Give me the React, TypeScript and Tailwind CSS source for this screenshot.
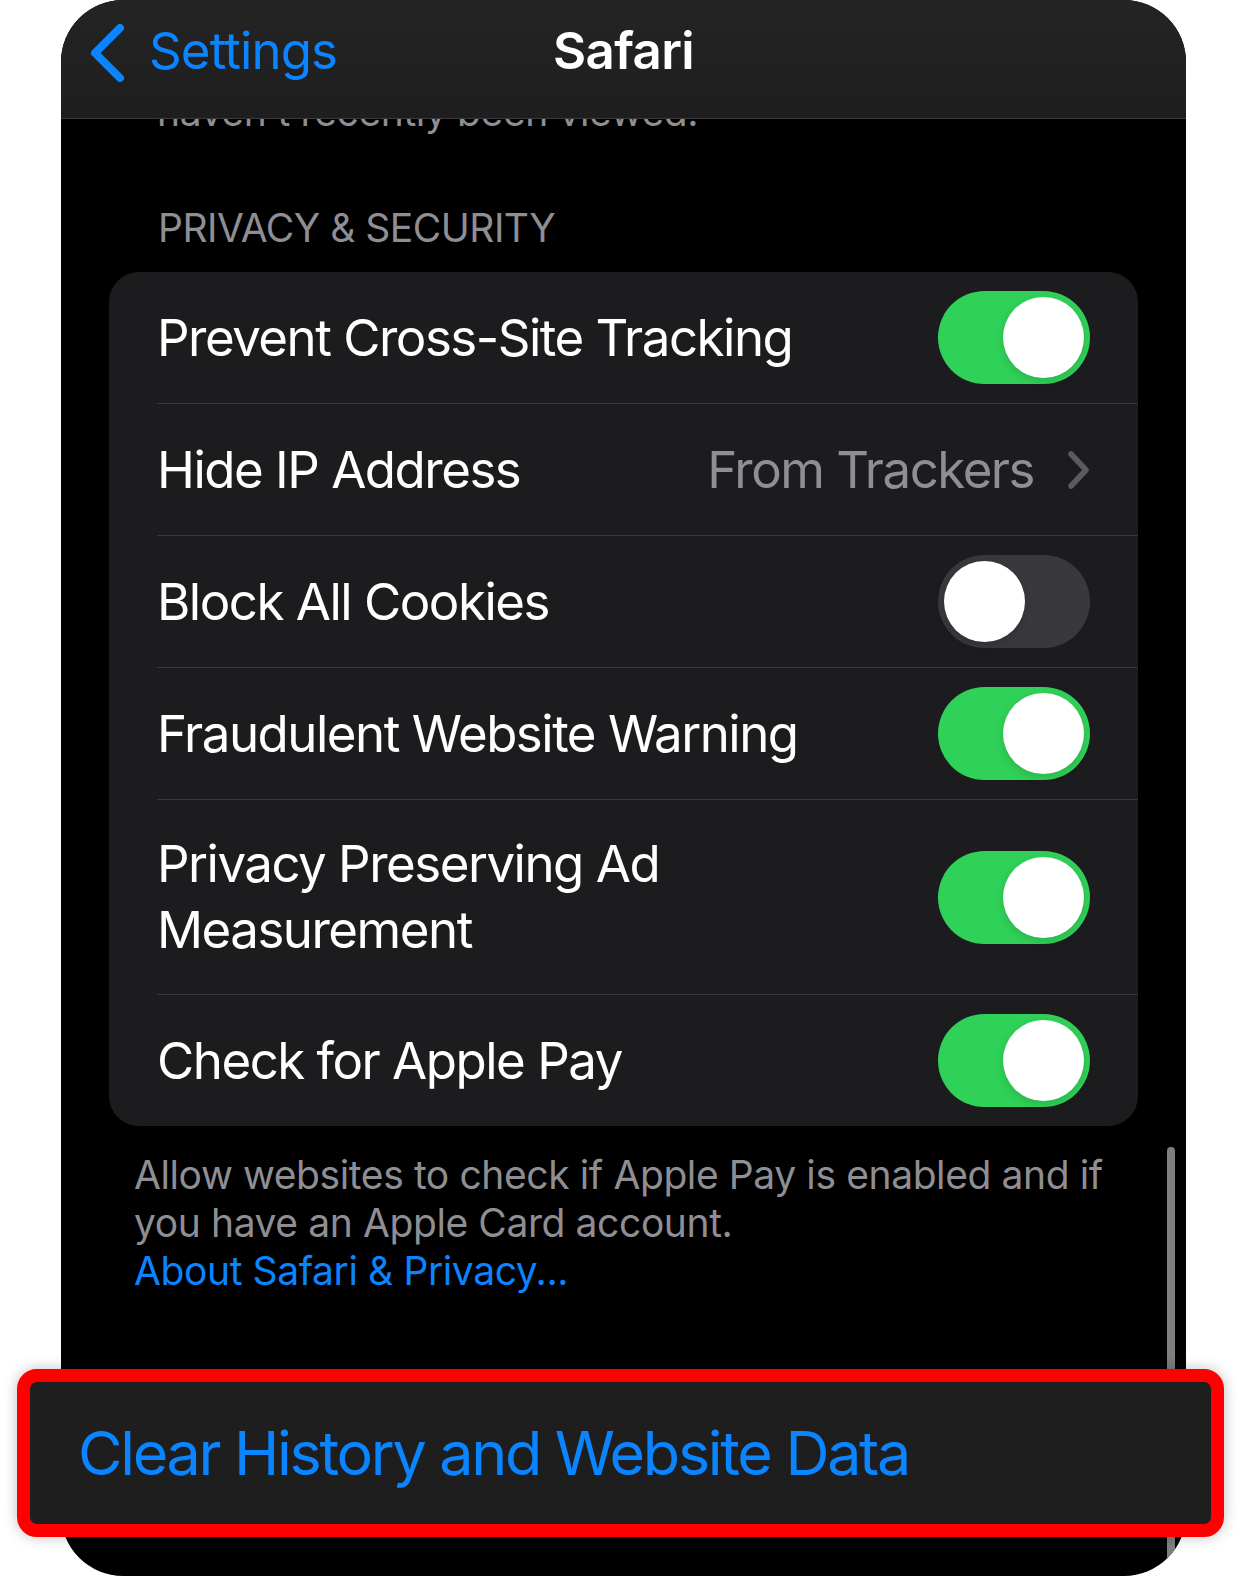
import React from 'react';

type Row = {
  label: React.ReactNode;
  toggle?: boolean;
  value?: string;
  tall?: boolean;
};

const rows: Row[] = [
  { label: 'Prevent Cross-Site Tracking', toggle: true },
  { label: 'Hide IP Address', value: 'From Trackers' },
  { label: 'Block All Cookies', toggle: false },
  { label: 'Fraudulent Website Warning', toggle: true },
  { label: 'Privacy Preserving Ad Measurement', toggle: true, tall: true },
  { label: 'Check for Apple Pay', toggle: true },
];

function Toggle({ on }: { on: boolean }) {
  return (
    <div
      className={`flex h-[93px] w-[152px] shrink-0 items-center rounded-full p-[6px] ${
        on ? 'justify-end bg-[#30d158]' : 'justify-start bg-[#39393d]'
      }`}
    >
      <div className="h-[81px] w-[81px] rounded-full bg-white shadow-[0_3px_8px_rgba(0,0,0,0.15)]" />
    </div>
  );
}

function Chevron() {
  return (
    <svg width="22" height="38" viewBox="0 0 22 38" className="shrink-0">
      <polyline
        points="3,3 18,19 3,35"
        fill="none"
        stroke="#5b5b5f"
        strokeWidth="5.5"
        strokeLinecap="round"
        strokeLinejoin="round"
      />
    </svg>
  );
}

export default function App() {
  return (
    <div className="relative h-[1576px] w-[1242px] overflow-hidden bg-white font-[Inter,'Noto_Sans',sans-serif]">
      <div className="relative ml-[61px] h-[1576px] w-[1125px] overflow-hidden rounded-[62px] bg-black">
        {/* scrolled content */}
        <div className="pt-[88px]">
          <p className="pl-[96px] text-[39px] leading-[48px] tracking-[-0.4px] text-[#8e8e93]">
            haven't recently been viewed.
          </p>
          <p className="mt-[68px] pl-[97px] text-[39px] leading-[48px] tracking-[-0.5px] text-[#8e8e93]">
            PRIVACY &amp; SECURITY
          </p>
          <div className="mx-[48px] mt-[20px] overflow-hidden rounded-[30px] bg-[#1c1c1e]">
            {rows.map((row, i) => (
              <div key={i}>
                {i > 0 && <div className="ml-[48px] h-px bg-[#38383a]" />}
                <div
                  className={`flex items-center justify-between pl-[48px] pr-[48px] ${
                    row.tall ? 'h-[194px]' : 'h-[131px]'
                  }`}
                >
                  <span
                    className={`text-[51px] tracking-[-1.5px] text-white ${
                      row.tall ? 'max-w-[680px] leading-[66px]' : 'leading-[62px]'
                    }`}
                  >
                    {row.label}
                  </span>
                  {row.toggle !== undefined && <Toggle on={row.toggle} />}
                  {row.value && (
                    <div className="flex items-center gap-[34px]">
                      <span className="text-[51px] leading-[62px] tracking-[-1.5px] text-[#8e8e93]">
                        {row.value}
                      </span>
                      <Chevron />
                    </div>
                  )}
                </div>
              </div>
            ))}
          </div>
          <div className="mt-[25px] pl-[73px] text-[39px] leading-[48px] tracking-[-0.4px] text-[#8e8e93]">
            <p className="whitespace-nowrap">Allow websites to check if Apple Pay is enabled and if</p>
            <p className="whitespace-nowrap">you have an Apple Card account.</p>
            <p className="whitespace-nowrap text-[#0a84ff]">About Safari &amp; Privacy...</p>
          </div>
        </div>

        {/* navigation bar */}
        <div className="absolute inset-x-0 top-0 grid h-[119px] grid-cols-[1fr_auto_1fr] items-start border-b border-[#3a3a3c] bg-gradient-to-b from-[#242424] to-[#1e1e1e] pt-[20px]">
          <div className="flex items-start gap-[22px] pl-[28px]">
            <svg width="38" height="62" viewBox="0 0 38 62" className="mt-[2px] shrink-0">
              <polyline
                points="31,6 6,31 31,56"
                fill="none"
                stroke="#0a84ff"
                strokeWidth="8"
                strokeLinecap="round"
                strokeLinejoin="round"
              />
            </svg>
            <span className="text-[51px] leading-[62px] tracking-[-0.9px] text-[#0a84ff]">Settings</span>
          </div>
          <span className="text-[51px] font-semibold leading-[62px] tracking-[-0.6px] text-white">Safari</span>
          <div />
        </div>

        {/* scroll indicator */}
        <div className="absolute left-[1106px] top-[1147px] h-[420px] w-[8px] rounded-full bg-[#7f7f7f]" />
      </div>

      {/* highlighted row callout */}
      <div className="absolute left-[17px] top-[1369px] h-[168px] w-[1207px] rounded-[20px] border-[13px] border-[#ff0000] bg-[#1e1e1e] shadow-[0_0_14px_rgba(0,0,0,0.25)]">
        <div className="flex h-full items-center rounded-[6px] pl-[48px]">
          <span className="text-[61px] leading-[74px] tracking-[-2.3px] text-[#0a84ff]">
            Clear History and Website Data
          </span>
        </div>
      </div>
    </div>
  );
}
